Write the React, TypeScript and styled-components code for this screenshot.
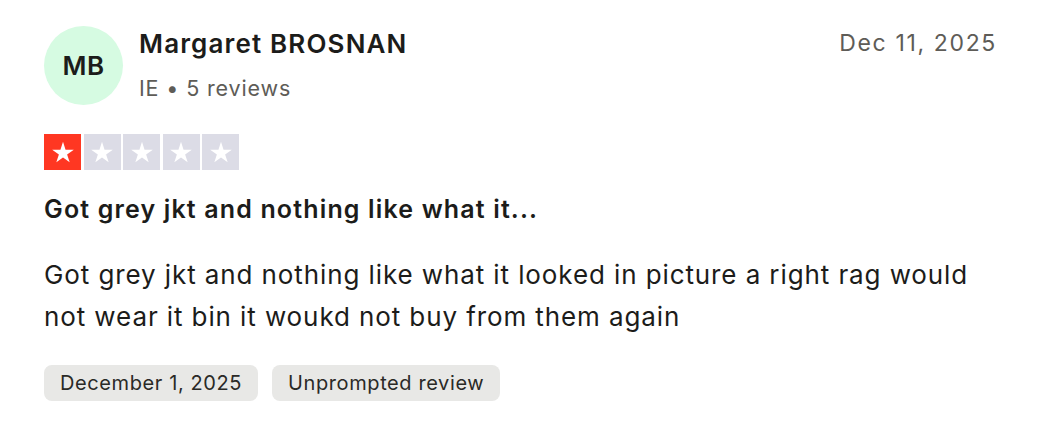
import React from 'react';
import styled, { createGlobalStyle } from 'styled-components';

const GlobalStyle = createGlobalStyle`
  body {
    margin: 0;
    background: #ffffff;
    font-family: Inter, 'Noto Sans', sans-serif;
    color: #1c1c1a;
  }
`;

const Card = styled.article`
  width: 1038px;
  height: 436px;
  box-sizing: border-box;
  padding: 26px 41px 0 44px;
`;

const Header = styled.header`
  display: flex;
  align-items: flex-start;
`;

const Avatar = styled.div`
  width: 79px;
  height: 79px;
  border-radius: 50%;
  background: #d6fbe2;
  display: flex;
  align-items: center;
  justify-content: center;
  font-size: 26px;
  font-weight: 600;
  letter-spacing: 0.5px;
  color: #1c1c1a;
  flex-shrink: 0;
`;

const Consumer = styled.div`
  flex: 1;
  margin-left: 16px;
  display: flex;
  flex-direction: column;
  gap: 14px;
  padding-top: 2px;
`;

const Name = styled.div`
  font-size: 26px;
  font-weight: 600;
  line-height: 32px;
  letter-spacing: 1.15px;
`;

const Meta = styled.div`
  font-size: 21.5px;
  line-height: 28px;
  letter-spacing: 0.85px;
  color: #5e5c57;
`;

const DateText = styled.time`
  font-size: 23px;
  line-height: 32px;
  letter-spacing: 1.65px;
  color: #5e5c57;
  padding-top: 1px;
`;

const Stars = styled.div`
  display: flex;
  gap: 2.5px;
  margin-top: 29px;
`;

const StarBox = styled.div<{ $active: boolean }>`
  width: 37px;
  height: 36px;
  background: ${({ $active }) => ($active ? '#ff3722' : '#dcdce6')};
  display: flex;
  align-items: center;
  justify-content: center;
`;

const Title = styled.h2`
  margin: 23px 0 0;
  font-size: 25px;
  font-weight: 600;
  line-height: 32px;
  letter-spacing: 1.15px;
`;

const Body = styled.p`
  margin: 29px 0 0;
  font-size: 26px;
  line-height: 42px;
  letter-spacing: 0.9px;
`;

const Tags = styled.div`
  display: flex;
  gap: 14px;
  margin-top: 27px;
`;

const Tag = styled.span`
  background: #e8e8e6;
  border-radius: 8px;
  padding: 0 16px;
  height: 36px;
  display: flex;
  align-items: center;
  font-size: 20px;
  letter-spacing: 0.6px;
  color: #2a2a27;
`;

const Star = () => (
  <svg width="24" height="24" viewBox="0 0 24 24">
    <path
      fill="#ffffff"
      d="M12 1.8l2.55 7.85h8.25l-6.68 4.85 2.55 7.85L12 17.5l-6.67 4.85 2.55-7.85L1.2 9.65h8.25z"
    />
  </svg>
);

export default function App() {
  const rating = 1;
  return (
    <>
      <GlobalStyle />
      <Card>
        <Header>
          <Avatar>MB</Avatar>
          <Consumer>
            <Name>Margaret BROSNAN</Name>
            <Meta>IE • 5 reviews</Meta>
          </Consumer>
          <DateText>Dec 11, 2025</DateText>
        </Header>
        <Stars>
          {[0, 1, 2, 3, 4].map((i) => (
            <StarBox key={i} $active={i < rating}>
              <Star />
            </StarBox>
          ))}
        </Stars>
        <Title>Got grey jkt and nothing like what it...</Title>
        <Body>
          Got grey jkt and nothing like what it looked in picture a right rag would
          <br />
          not wear it bin it woukd not buy from them again
        </Body>
        <Tags>
          <Tag>December 1, 2025</Tag>
          <Tag>Unprompted review</Tag>
        </Tags>
      </Card>
    </>
  );
}
